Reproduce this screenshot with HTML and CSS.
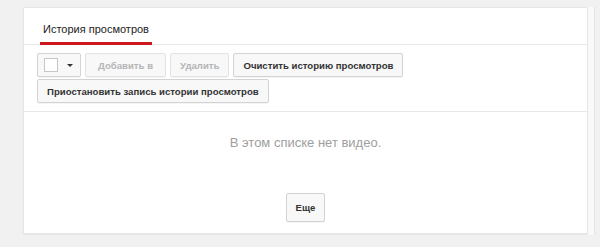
FILE: index.html
```html
<!DOCTYPE html>
<html lang="ru">
<head>
  <meta charset="UTF-8">
  <title>История просмотров</title>
  <link rel="stylesheet" href="styles.css">
</head>
<body>
  <div class="page">
    <!-- History card -->
    <div class="card">
      <div class="card-head">
        <span class="tab">История просмотров</span>
      </div>

      <div class="toolbar">
        <button class="btn btn-select">
          <span class="checkbox"></span>
          <span class="arrow"></span>
        </button>
        <button class="btn btn-add" disabled>Добавить в</button>
        <button class="btn" disabled>Удалить</button>
        <button class="btn">Очистить историю просмотров</button>
        <button class="btn">Приостановить запись истории просмотров</button>
      </div>

      <div class="list-body">
        <p class="empty">В этом списке нет видео.</p>
        <button class="btn btn-more">Еще</button>
      </div>
    </div>

    <!-- Side strip -->
    <div class="side"></div>
  </div>
</body>
</html>
```

FILE: styles.css
```css
/* General */
body {
  margin: 0;
  background: #f1f1f1;
  font-family: 'Liberation Sans', Arial, sans-serif;
  color: #333;
}

.page {
  display: flex;
  align-items: flex-start;
  padding: 7px 0 0 23px;
}

/* Card */
.card {
  width: 563px;
  height: 225px;
  background: #fff;
  border: 1px solid #e6e6e6;
  box-shadow: 0 1px 2px rgba(0, 0, 0, 0.06);
  display: flex;
  flex-direction: column;
}

.side {
  width: 6px;
  height: 228px;
  background: #f9f9f9;
  border-right: 1px solid #e4e4e4;
}

.card-head {
  height: 36px;
  border-bottom: 1px solid #e8e8e8;
  padding-left: 16px;
  display: flex;
  align-items: flex-end;
}

.tab {
  display: inline-block;
  font-size: 11px;
  padding: 0 3px 7px;
  border-bottom: 3px solid #cc181e;
  margin-bottom: -1px;
  color: #222;
}

/* Toolbar */
.toolbar {
  display: flex;
  flex-wrap: wrap;
  column-gap: 4px;
  row-gap: 2px;
  padding: 8px 13px 8px;
  border-bottom: 1px solid #e8e8e8;
}

.btn {
  height: 24px;
  padding: 0 9px;
  background: #f8f8f8;
  border: 1px solid #d3d3d3;
  border-radius: 2px;
  box-shadow: 0 1px 0 rgba(0, 0, 0, 0.04);
  font-family: 'Liberation Sans', Arial, sans-serif;
  font-size: 9.6px;
  font-weight: bold;
  color: #333;
  cursor: pointer;
}

.btn:disabled {
  color: #b5b5b5;
  border-color: #e3e3e3;
  cursor: default;
}

.btn-add {
  padding: 0 12px;
}

.btn-select {
  width: 44px;
  display: flex;
  align-items: center;
  padding: 0 0 0 6px;
}

.checkbox {
  width: 12px;
  height: 12px;
  background: #fff;
  border: 1px solid #c6c6c6;
}

.arrow {
  margin-left: 9px;
  width: 0;
  height: 0;
  border-left: 3px solid transparent;
  border-right: 3px solid transparent;
  border-top: 3px solid #333;
}

/* Empty list */
.list-body {
  flex: 1;
  display: flex;
  flex-direction: column;
  align-items: center;
}

.empty {
  margin: 23px 0 0;
  font-size: 13px;
  color: #9e9e9e;
}

.btn-more {
  margin-top: 43px;
  height: 29px;
  padding: 0 9px;
}
```
